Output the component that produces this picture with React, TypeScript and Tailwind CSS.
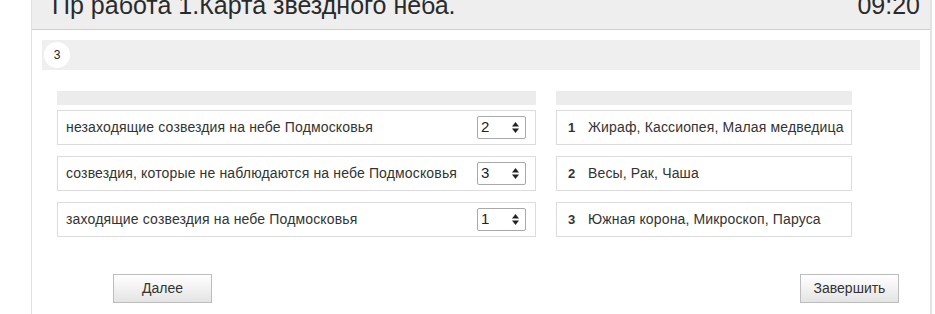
import React from 'react';

const leftRows = [
    { text: 'незаходящие созвездия на небе Подмосковья', value: '2' },
    { text: 'созвездия, которые не наблюдаются на небе Подмосковья', value: '3' },
    { text: 'заходящие созвездия на небе Подмосковья', value: '1' },
];

const rightRows = [
    { n: '1', text: 'Жираф, Кассиопея, Малая медведица' },
    { n: '2', text: 'Весы, Рак, Чаша' },
    { n: '3', text: 'Южная корона, Микроскоп, Паруса' },
];

function SelectBox({ value }: { value: string }) {
    return (
        <div className="flex h-[23px] w-[49px] shrink-0 items-center justify-between rounded-[2px] border border-[#a9a9a9] bg-white pl-[3px] pr-[6px] text-[15px] text-[#222]">
            <span>{value}</span>
            <svg width="7" height="11" viewBox="0 0 7 11">
                <path d="M3.5 0 L7 4.5 L0 4.5 Z" fill="#222" />
                <path d="M3.5 11 L7 6.5 L0 6.5 Z" fill="#222" />
            </svg>
        </div>
    );
}

function Button({ label }: { label: string }) {
    return (
        <button
            type="button"
            className="h-[29px] w-[99px] border border-[#bdbdbd] bg-gradient-to-b from-white to-[#e4e4e4] text-[14px] text-[#333]"
        >
            {label}
        </button>
    );
}

export default function App() {
    return (
        <div className="h-[314px] w-[935px] overflow-hidden bg-white font-['Liberation_Sans',Arial,sans-serif]">
            <div className="ml-[31px] w-[901px] border-l border-r-2 border-[#e2e2e2]">
                <div className="flex h-[30px] items-end justify-between border-b border-[#cfcfcf] bg-[#eeeeee] pl-[20px] pr-[10px]">
                    <span className="mb-[12px] text-[25px] leading-[24px] text-[#2a2a2a]">Пр работа 1.Карта звездного неба.</span>
                    <span className="mb-[12px] text-[25px] leading-[24px] text-[#2a2a2a]">09:20</span>
                </div>

                <div className="px-[10px] pt-[10px]">
                    <div className="flex h-[30px] items-center bg-[#efefef] pl-[2px]">
                        <div className="flex h-[26px] w-[26px] items-center justify-center rounded-full bg-white text-[12px] text-[#222]">
                            3
                        </div>
                    </div>
                </div>

                <div className="mt-[21px] flex gap-[20px] pl-[25px]">
                    <div className="flex w-[479px] flex-col">
                        <div className="h-[14px] bg-[#ececec]" />
                        <div className="mt-[5px] flex flex-col gap-[11px]">
                            {leftRows.map((r) => (
                                <div
                                    key={r.text}
                                    className="flex h-[35px] items-center justify-between border border-[#dcdcdc] pl-[8px] pr-[9px] text-[14px] tracking-[0.15px] text-[#333]"
                                >
                                    <span className="whitespace-nowrap">{r.text}</span>
                                    <SelectBox value={r.value} />
                                </div>
                            ))}
                        </div>
                    </div>

                    <div className="flex w-[296px] flex-col">
                        <div className="h-[14px] bg-[#ececec]" />
                        <div className="mt-[5px] flex flex-col gap-[11px]">
                            {rightRows.map((r) => (
                                <div
                                    key={r.n}
                                    className="flex h-[35px] items-center border border-[#dcdcdc] pl-[11px] text-[14px] tracking-[0.15px] text-[#333]"
                                >
                                    <span className="w-[20px] text-[13px] font-bold">{r.n}</span>
                                    <span className="whitespace-nowrap">{r.text}</span>
                                </div>
                            ))}
                        </div>
                    </div>
                </div>

                <div className="mt-[37px] flex h-[40px] justify-between pl-[81px] pr-[31px]">
                    <Button label="Далее" />
                    <Button label="Завершить" />
                </div>
            </div>
        </div>
    );
}
